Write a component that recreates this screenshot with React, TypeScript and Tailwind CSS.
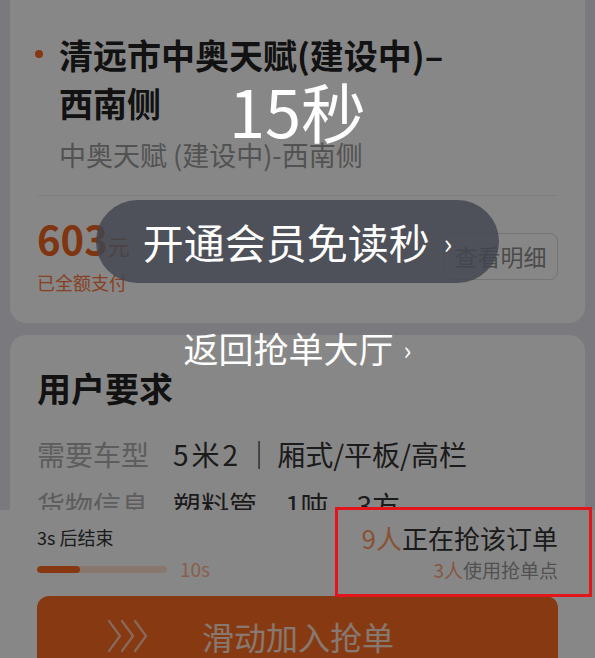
import { useState } from 'react';

const FONT = { fontFamily: '"Noto Sans CJK SC", "Noto Sans", sans-serif' };

function Chevrons() {
  return (
    <svg width="44" height="34" viewBox="0 0 44 34" fill="none">
      {[2, 15, 28].map(x => (
        <polyline
          key={x}
          points={`${x},2 ${x + 11},17 ${x},32`}
          stroke="#ffc9ad"
          strokeWidth="2.2"
          strokeLinecap="round"
          strokeLinejoin="round"
        />
      ))}
    </svg>
  );
}

export default function App() {
  const [elapsed] = useState(3);
  const total = 10;

  return (
    <div className="relative w-[595px] h-[658px] overflow-hidden bg-[#e6e6ee]" style={FONT}>
      {/* 页面内容 */}
      <div className="h-[510px] overflow-hidden">
        {/* 地址卡片 */}
        <div className="-mt-[40px] mx-[10px] rounded-[16px] bg-white px-[27px] pt-[16px] pb-[29px]">
          <p className="-mt-[8px] text-[24px] leading-[32px] text-[#333] whitespace-nowrap">
            广东省清远市清城区龙塘镇（距您约1.2公里）
          </p>
          <div className="mt-[31px] flex items-start">
            <span className="mt-[19px] -ml-[2px] mr-[16px] w-[8px] h-[8px] rounded-full bg-[#ff6a22] shrink-0" />
            <div>
              <h2 className="text-[34px] leading-[48px] font-bold text-[#222]">
                清远市中奥天赋(建设中)–<br />西南侧
              </h2>
              <p className="mt-[10px] text-[27px] leading-[36px] text-[#9c9c9c]">中奥天赋 (建设中)-西南侧</p>
            </div>
          </div>
          <div className="mt-[22px] h-px bg-[#ececec]" />
          <div className="pt-[22px] flex items-center justify-between">
            <div>
              <div className="flex items-baseline text-[#f0651f]">
                <span className="text-[40px] leading-[40px] font-semibold">603</span>
                <span className="text-[22px]">元</span>
              </div>
              <p className="mt-[8px] text-[18px] leading-[24px] text-[#ff7a3d]">已全额支付</p>
            </div>
            <button className="w-[115px] h-[47px] rounded-[8px] border border-[#dcdcdc] bg-white text-[23px] text-[#8e8e8e]">
              查看明细
            </button>
          </div>
        </div>

        {/* 用户要求 */}
        <div className="mt-[12px] mx-[10px] rounded-[16px] bg-white px-[27px] pt-[31px] pb-[30px]">
          <h3 className="text-[34px] leading-[44px] font-bold text-[#222]">用户要求</h3>
          <div className="mt-[24px] flex flex-col gap-[11px] text-[28px] leading-[40px]">
            <div className="flex gap-[24px]">
              <span className="text-[#b0b0b0]">需要车型</span>
              <span className="text-[#333]">
                <span className="tracking-[3px]">5米2</span>
                <span className="px-[4px]">｜</span>厢式/平板/高栏
              </span>
            </div>
            <div className="flex gap-[24px]">
              <span className="text-[#b0b0b0]">货物信息</span>
              <span className="text-[#333]">塑料管，1吨，3方</span>
            </div>
          </div>
        </div>
      </div>

      {/* 底部抢单栏 */}
      <div className="h-[148px] bg-white px-[37px]">
        <div className="flex justify-between pt-[15px]">
          <div>
            <p className="text-[18px] leading-[24px] text-[#333]">3s 后结束</p>
            <div className="mt-[8px] flex items-center gap-[13px]">
              <div className="w-[130px] h-[7px] rounded-full bg-[#ffe0cf] overflow-hidden">
                <div className="h-full rounded-full bg-[#ff6a22]" style={{ width: `${(elapsed / total) * 100 + 3}%` }} />
              </div>
              <span className="text-[19px] leading-[24px] text-[#ffb48e]">10s</span>
            </div>
          </div>
          <div className="-mt-[4px] flex flex-col items-end">
            <p className="text-[26px] leading-[34px] text-[#333]">
              <span className="text-[#ff9a66]">9人</span>正在抢该订单
            </p>
            <p className="mt-[2px] text-[19px] leading-[26px] text-[#999]">
              <span className="text-[#ffa27a]">3人</span>使用抢单点
            </p>
          </div>
        </div>
        <div className="mt-[13px] h-[80px] rounded-[12px] bg-[#ff6d22] flex items-center pl-[70px] gap-[51px]">
          <Chevrons />
          <span className="text-[32px] text-white/80">滑动加入抢单</span>
        </div>
      </div>

      {/* 遮罩层 */}
      <div className="absolute inset-0 bg-black/[0.47] flex flex-col items-center pt-[78px]">
        <p className="text-[65px] leading-[64px] font-normal text-white">15秒</p>
        <div className="mt-[58px] w-[403px] h-[83px] rounded-full bg-[#42464f]/[0.82] flex items-center justify-center gap-[14px]">
          <span className="text-[41px] text-white">开通会员免读秒</span>
          <span className="text-[28px] text-white">›</span>
        </div>
        <div className="mt-[43px] flex items-center gap-[10px] text-white">
          <span className="text-[35px] leading-[44px]">返回抢单大厅</span>
          <span className="text-[26px]">›</span>
        </div>
      </div>

      {/* 红框标注 */}
      <div className="absolute left-[335px] top-[507px] w-[257px] h-[90px] border-[3px] border-[#e4141b]" />
    </div>
  );
}
